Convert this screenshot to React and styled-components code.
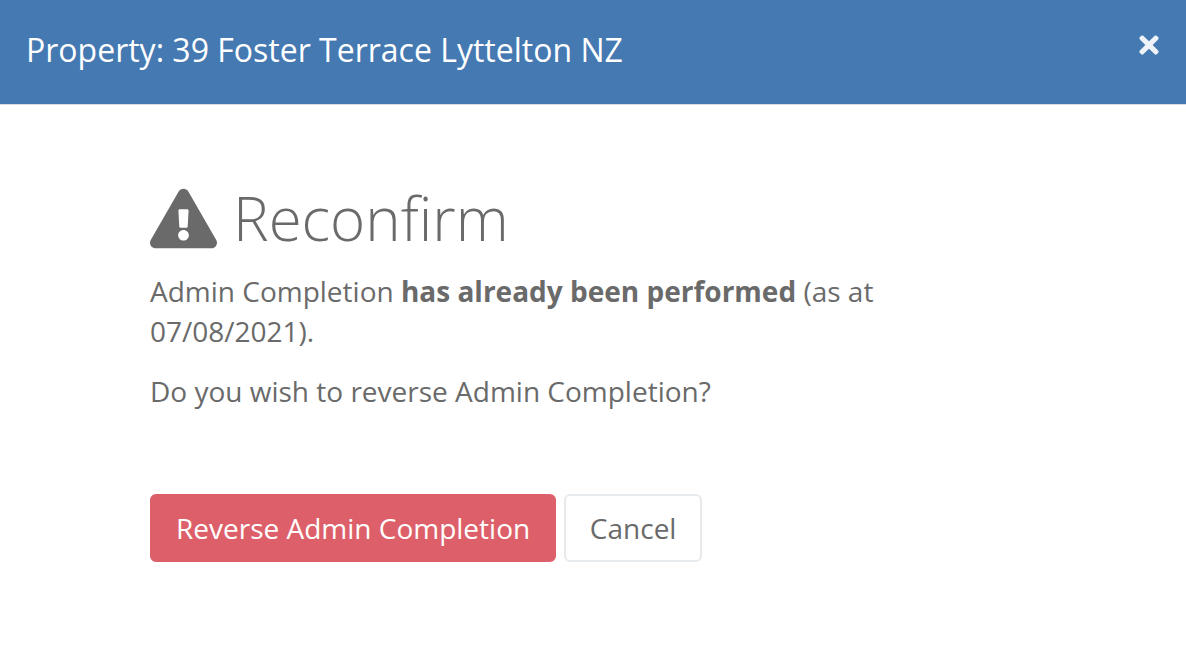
import React from 'react'
import styled, { createGlobalStyle } from 'styled-components'
import { FaExclamationTriangle, FaTimes } from 'react-icons/fa'

const GlobalStyle = createGlobalStyle`
  html, body { margin: 0; padding: 0; background: #fff; }
  body { font-family: "Open Sans", "Liberation Sans", sans-serif; color: #6a6a6a; }
`

export default function App() {
  return (
    <Modal>
      <GlobalStyle />
      <Header>
        <Title>Property: 39 Foster Terrace Lyttelton NZ</Title>
        <Close aria-label="Close"><FaTimes /></Close>
      </Header>
      <Body>
        <Heading>
          <FaExclamationTriangle />
          <span>Reconfirm</span>
        </Heading>
        <Para>
          Admin Completion <strong>has already been performed</strong> (as at 07/08/2021).
        </Para>
        <Para>Do you wish to reverse Admin Completion?</Para>
        <Actions>
          <Button $danger>Reverse Admin Completion</Button>
          <CancelButton>Cancel</CancelButton>
        </Actions>
      </Body>
    </Modal>
  )
}

const Modal = styled.div`
  width: 1186px;
  height: 646px;
  overflow: hidden;
  background: #fff;
`
const Header = styled.header`
  height: 105px;
  box-sizing: border-box;
  padding: 0 26px 4px;
  display: flex;
  align-items: center;
  justify-content: space-between;
  background: #4579b2;
  border-bottom: 1px solid #d8dde3;
`
const Title = styled.h4`
  margin: 0;
  font-size: 32px;
  font-weight: 400;
  line-height: 40px;
  color: #fff;
`
const Close = styled.button`
  display: flex;
  margin: -10px -3px 0 0;
  padding: 0;
  border: 0;
  background: none;
  font-size: 28px;
  color: #eef3f9;
`
const Body = styled.main`
  width: 740px;
  padding: 73px 0 0 150px;
`
const Heading = styled.h1`
  display: flex;
  align-items: center;
  gap: 16px;
  margin: 0 0 13px;
  height: 80px;
  font-size: 60px;
  font-weight: 300;
  color: #6a6a6a;
  svg { font-size: 67px; }
`
const Para = styled.p`
  margin: 0 0 20px;
  font-size: 28px;
  line-height: 40px;
  color: #6a6a6a;
  strong { font-weight: 700; }
`
const Actions = styled.div`
  display: flex;
  gap: 8px;
  margin-top: 83px;
`
const Button = styled.button`
  height: 68px;
  box-sizing: border-box;
  padding: 0 24px;
  font-family: inherit;
  font-size: 28px;
  border-radius: 6px;
  border: 2px solid ${p => (p.$danger ? '#dd5f69' : '#e7eaec')};
  background: ${p => (p.$danger ? '#dd5f69' : '#fff')};
  color: ${p => (p.$danger ? '#fff' : '#6a6a6a')};
`
const CancelButton = styled(Button)`
  width: 138px;
  padding: 0;
`
